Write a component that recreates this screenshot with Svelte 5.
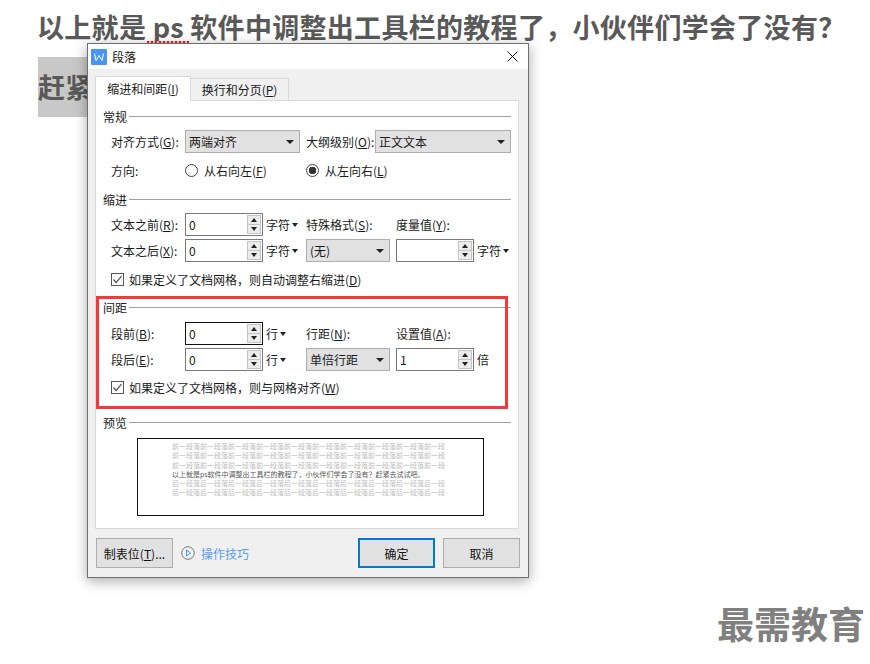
<script>
  const before = '前一段落'.repeat(10).slice(0, 39);
  const after = '后一段落'.repeat(10).slice(0, 39);
</script>

{#snippet spin(value, focused)}
  <div class="spin" class:focused>
    <span class="spin-value">{value}</span>
    <div class="spin-btns">
      <span class="spin-btn"><i class="up"></i></span>
      <span class="spin-btn"><i class="down"></i></span>
    </div>
  </div>
{/snippet}

{#snippet select(value)}
  <div class="select"><span>{value}</span><i class="down big"></i></div>
{/snippet}

{#snippet checkmark()}
  <svg width="13" height="13" viewBox="0 0 13 13">
    <rect x=".5" y=".5" width="12" height="12" fill="#fff" stroke="#555" />
    <path d="M2.5 6.5 L5.2 9.5 L10.5 3.2" fill="none" stroke="#555" stroke-width="1.2" />
  </svg>
{/snippet}

<div class="page">
  <div class="doc">
    <p>以上就是<span class="typo">{' ps '}</span>软件中调整出工具栏的教程了，小伙伴们学会了没有？</p>
    <p><span class="picked">赶紧去试试吧。</span></p>
  </div>

  <div class="dialog">
    <div class="titlebar">
      <svg class="logo" width="16" height="16" viewBox="0 0 16 16">
        <rect width="16" height="16" rx="1" fill="#4b94f7" />
        <path d="M3.5 4.5 L5 11.5 L8 6.5 L11 11.5 L12.5 4.5" fill="none" stroke="#fff" stroke-width="1" />
      </svg>
      <span class="title">段落</span>
      <svg class="close" width="11" height="11" viewBox="0 0 11 11">
        <path d="M.5 .5 L10.5 10.5 M10.5 .5 L.5 10.5" stroke="#111" stroke-width="1" />
      </svg>
    </div>

    <div class="tabs">
      <div class="tab active">缩进和间距(<u>I</u>)</div>
      <div class="tab">换行和分页(<u>P</u>)</div>
    </div>

    <div class="panel">
      <div class="legend first"><span>常规</span></div>
      <div class="row general">
        <span>对齐方式(<u>G</u>):</span>
        {@render select('两端对齐')}
        <span class="outline-label">大纲级别(<u>O</u>):</span>
        {@render select('正文文本')}
      </div>
      <div class="row direction">
        <span>方向:</span>
        <label class="radio"><i class="dot"></i><span>从右向左(<u>F</u>)</span></label>
        <label class="radio"><i class="dot on"></i><span>从左向右(<u>L</u>)</span></label>
      </div>

      <div class="legend indent"><span>缩进</span></div>
      <div class="row fields">
        <span>文本之前(<u>R</u>):</span>
        {@render spin('0')}
        <span class="unit">字符<i class="down"></i></span>
        <span>特殊格式(<u>S</u>):</span>
        <span class="measure">度量值(<u>Y</u>):</span>
      </div>
      <div class="row fields second">
        <span>文本之后(<u>X</u>):</span>
        {@render spin('0')}
        <span class="unit">字符<i class="down"></i></span>
        {@render select('(无)')}
        {@render spin('')}
        <span class="unit">字符<i class="down"></i></span>
      </div>
      <label class="check">
        {@render checkmark()}
        <span>如果定义了文档网格，则自动调整右缩进(<u>D</u>)</span>
      </label>

      <div class="legend spacing"><span>间距</span></div>
      <div class="row fields spacing-first">
        <span>段前(<u>B</u>):</span>
        {@render spin('0', true)}
        <span class="unit">行<i class="down"></i></span>
        <span>行距(<u>N</u>):</span>
        <span class="measure">设置值(<u>A</u>):</span>
      </div>
      <div class="row fields second">
        <span>段后(<u>E</u>):</span>
        {@render spin('0')}
        <span class="unit">行<i class="down"></i></span>
        {@render select('单倍行距')}
        {@render spin('1')}
        <span class="unit">倍</span>
      </div>
      <label class="check last">
        {@render checkmark()}
        <span>如果定义了文档网格，则与网格对齐(<u>W</u>)</span>
      </label>

      <div class="legend preview-legend"><span>预览</span></div>
      <div class="preview">
        <div class="preview-text">
          <div>{before}</div>
          <div>{before}</div>
          <div>{before}</div>
          <div class="current">以上就是ps软件中调整出工具栏的教程了，小伙伴们学会了没有？赶紧去试试吧。</div>
          <div>{after}</div>
          <div>{after}</div>
          <div>{after}</div>
        </div>
      </div>
    </div>

    <div class="footer">
      <button class="btn">制表位(<u>T</u>)...</button>
      <div class="tips">
        <svg width="14" height="14" viewBox="0 0 14 14">
          <circle cx="7" cy="7" r="6.3" fill="none" stroke="#777" />
          <path d="M5.5 4 L9.5 7 L5.5 10 Z" fill="none" stroke="#4b94f7" />
        </svg>
        <span>操作技巧</span>
      </div>
      <button class="btn primary">确定</button>
      <button class="btn">取消</button>
    </div>

    <div class="highlight"></div>
  </div>

  <div class="watermark">最需教育</div>
</div>

<style>
  :global(body) {
    background: #fff;
    font-family: "Noto Sans CJK SC", "Liberation Sans", sans-serif;
  }

  .page {
    position: relative;
    height: 664px;
    overflow: hidden;
  }

  .doc {
    padding: 0 0 0 37px;
    margin-top: -3px;
    font-size: 27px;
    font-weight: 700;
    letter-spacing: 0.3px;
    line-height: 60px;
    color: #595959;
    white-space: nowrap;
  }

  .doc p {
    margin: 0;
  }

  .typo {
    position: relative;
    white-space: pre;
  }

  /* spell check squiggle */
  .typo::after {
    content: "";
    position: absolute;
    left: 1px;
    right: 1px;
    top: 34px;
    height: 2px;
    background: repeating-linear-gradient(90deg, #e02020 0 2px, #f7c4c4 2px 4px);
  }

  .picked {
    display: inline-block;
    margin-left: 1px;
    background: #c8c8c8;
  }

  .dialog {
    position: absolute;
    left: 87px;
    top: 43px;
    width: 442px;
    height: 535px;
    box-sizing: border-box;
    border: 1px solid #6f6f6f;
    background: #f0f0f0;
    box-shadow: 0 3px 12px rgba(0, 0, 0, 0.35);
    font-size: 12px;
    color: #1a1a1a;
  }

  .titlebar {
    height: 25px;
    background: #fff;
    display: flex;
    align-items: center;
    padding: 0 10px 0 3px;
  }

  .logo {
    margin-right: 5px;
  }

  .title {
    flex: 1;
    font-size: 12px;
  }

  .tabs {
    display: flex;
    align-items: flex-end;
    height: 32px;
    padding-left: 7px;
    position: relative;
    z-index: 1;
    margin-bottom: -1px;
  }

  .tab {
    box-sizing: border-box;
    height: 23px;
    width: 98px;
    border: 1px solid #d9d9d9;
    border-left: none;
    background: #f0f0f0;
    text-align: center;
    line-height: 21px;
  }

  .tab.active {
    height: 25px;
    width: 96px;
    background: #fff;
    border-left: 1px solid #d9d9d9;
    border-bottom: none;
    line-height: 24px;
  }

  .panel {
    box-sizing: border-box;
    margin-left: 7px;
    width: 424px;
    height: 429px;
    background: #fff;
    border: 1px solid #d9d9d9;
    padding: 0 7px;
  }

  .legend {
    display: flex;
    align-items: center;
    gap: 2px;
    height: 16px;
  }

  .legend::after {
    content: "";
    flex: 1;
    border-top: 1px solid #a0a0a0;
  }

  .legend.first {
    margin-top: 7px;
  }

  .legend.indent {
    margin-top: 9px;
  }

  .legend.spacing {
    margin-top: 11px;
  }

  .legend.preview-legend {
    margin-top: 18px;
  }

  .row {
    display: grid;
    align-items: center;
    padding-left: 8px;
    white-space: nowrap;
  }

  .general {
    grid-template-columns: 74px 115px 6px 69px 136px;
    margin-top: 6px;
    height: 23px;
  }

  .general .outline-label {
    grid-column: 4;
  }

  .direction {
    grid-template-columns: 74px 121px 1fr;
    margin-top: 6px;
    height: 23px;
  }

  .fields {
    grid-template-columns: 74px 78px 43px 84px 6px 78px 1fr;
    margin-top: 6px;
    height: 23px;
  }

  .fields.spacing-first {
    margin-top: 7px;
  }

  .fields.second {
    margin-top: 3px;
  }

  .fields > .measure {
    grid-column: 6;
  }

  .fields.second > :nth-child(5) {
    grid-column: 6;
  }

  .unit {
    padding-left: 3px;
    display: flex;
    align-items: center;
    gap: 2px;
  }

  .select {
    box-sizing: border-box;
    height: 23px;
    background: #e1e1e1;
    border: 1px solid #adadad;
    display: flex;
    align-items: center;
    justify-content: space-between;
    padding: 0 5px 0 3px;
  }

  .spin {
    box-sizing: border-box;
    height: 23px;
    background: #fff;
    border: 1px solid #7a7a7a;
    display: flex;
    align-items: center;
    justify-content: space-between;
    padding: 1px 1px 1px 3px;
  }

  .spin.focused {
    border-color: #111;
  }

  .spin-btns {
    display: flex;
    flex-direction: column;
    height: 100%;
    width: 14px;
    box-sizing: border-box;
  }

  .spin-btn {
    flex: 1;
    box-sizing: border-box;
    background: #ececec;
    border: 1px solid #c4c4c4;
    display: flex;
    align-items: center;
    justify-content: center;
  }

  .spin-btn + .spin-btn {
    border-top: none;
  }

  i.up,
  i.down {
    display: inline-block;
    width: 0;
    height: 0;
    border-left: 3px solid transparent;
    border-right: 3px solid transparent;
  }

  i.up {
    border-bottom: 4px solid #222;
  }

  i.down {
    border-top: 4px solid #222;
  }

  i.down.big {
    border-left-width: 4px;
    border-right-width: 4px;
    border-top-width: 4px;
  }

  .radio {
    display: flex;
    align-items: center;
    white-space: nowrap;
  }

  .dot {
    box-sizing: border-box;
    width: 13px;
    height: 13px;
    border: 1px solid #444;
    border-radius: 50%;
    margin-right: 6px;
    background: #fff;
  }

  .dot.on {
    background: radial-gradient(circle, #333 0 3.5px, #fff 4px);
  }

  .check {
    display: flex;
    align-items: center;
    gap: 5px;
    height: 18px;
    margin-top: 8px;
    padding-left: 8px;
    white-space: nowrap;
  }

  .check.last {
    margin-top: 7px;
  }

  .preview {
    box-sizing: border-box;
    width: 347px;
    height: 78px;
    margin: 8px 0 0 34px;
    border: 1px solid #111;
    background: #fff;
    padding: 3px 0 0 34px;
  }

  .preview-text {
    height: 57px;
    overflow: hidden;
    font-size: 7px;
    line-height: 9.25px;
    color: #bdbdbd;
    white-space: nowrap;
  }

  .preview-text .current {
    color: #555;
  }

  .footer {
    display: flex;
    align-items: center;
    padding: 9px 8px 0 8px;
  }

  .btn {
    box-sizing: border-box;
    width: 77px;
    height: 30px;
    background: #e1e1e1;
    border: 1px solid #adadad;
    font: inherit;
    color: #111;
    padding: 0;
  }

  .btn.primary {
    border: 2px solid #0078d7;
    margin-right: 8px;
  }

  .tips {
    flex: 1;
    display: flex;
    align-items: center;
    gap: 6px;
    padding-left: 8px;
    color: #5b9bf2;
  }

  .highlight {
    position: absolute;
    left: 8px;
    top: 252px;
    width: 412px;
    height: 113px;
    box-sizing: border-box;
    border: 3px solid #f63838;
    pointer-events: none;
  }

  .watermark {
    position: absolute;
    left: 717px;
    top: 597px;
    font-size: 37px;
    font-weight: 700;
    line-height: 52px;
    color: #808080;
    white-space: nowrap;
  }
</style>
